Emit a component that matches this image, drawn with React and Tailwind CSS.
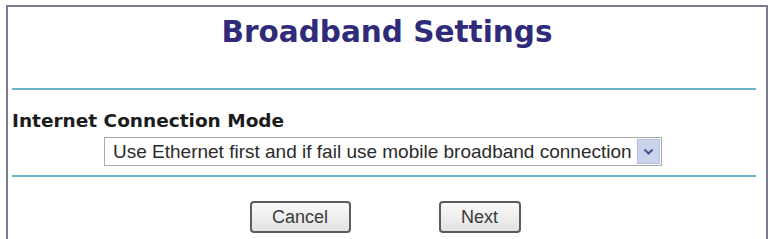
export default function App() {
  return (
    <div className="w-[770px] h-[239px] bg-white overflow-hidden pt-[5px] pl-[6px] pr-[2px]">
      <div className="h-[240px] border-[2px] border-b-0 border-[#7c7b95] bg-white">
        <div className="pt-[8px] text-center text-[29.5px] leading-[34px] font-bold text-[#2f2b7a]" style={{ fontFamily: '"DejaVu Sans", Verdana, sans-serif' }}>
          Broadband Settings
        </div>
        <div className="mt-[39px] ml-[4px] mr-[10px] h-[2px] bg-[#6cb4c9]" />
        <div className="mt-[20px] ml-[4px] text-[18.5px] leading-[21px] font-bold text-[#1c1c1c]" style={{ fontFamily: '"DejaVu Sans", Verdana, sans-serif' }}>
          Internet Connection Mode
        </div>
        <div className="mt-[6px] ml-[96px] w-[558px] h-[29px] border border-[#a9a9a9] flex items-center justify-between bg-white">
          <span className="pl-[8px] text-[19px] leading-[22px] text-[#2b2b2b] whitespace-nowrap" style={{ fontFamily: '"Liberation Sans", Arial, sans-serif' }}>
            Use Ethernet first and if fail use mobile broadband connection
          </span>
          <div className="mr-[1px] w-[23px] h-[25px] bg-[#c9d3ec] border border-[#b4c0e0] flex items-center justify-center">
            <svg width="11" height="8" viewBox="0 0 11 8">
              <path d="M1.5 1.5 L5.5 5.5 L9.5 1.5" fill="none" stroke="#4a5590" strokeWidth="2.2" />
            </svg>
          </div>
        </div>
        <div className="mt-[9px] ml-[4px] mr-[10px] h-[2px] bg-[#6cb4c9]" />
        <div className="mt-[24px] flex justify-center gap-[88px] pr-[4px]">
          <button className="w-[101px] h-[32px] rounded-[4px] border-[2px] border-[#5c5c5c] bg-gradient-to-b from-[#fafafa] to-[#e2e2e2] text-[18px] text-[#3a3a3a]" style={{ fontFamily: '"Liberation Sans", Arial, sans-serif' }}>
            Cancel
          </button>
          <button className="w-[82px] h-[32px] rounded-[4px] border-[2px] border-[#5c5c5c] bg-gradient-to-b from-[#fafafa] to-[#e2e2e2] text-[18px] text-[#3a3a3a]" style={{ fontFamily: '"Liberation Sans", Arial, sans-serif' }}>
            Next
          </button>
        </div>
      </div>
    </div>
  );
}
